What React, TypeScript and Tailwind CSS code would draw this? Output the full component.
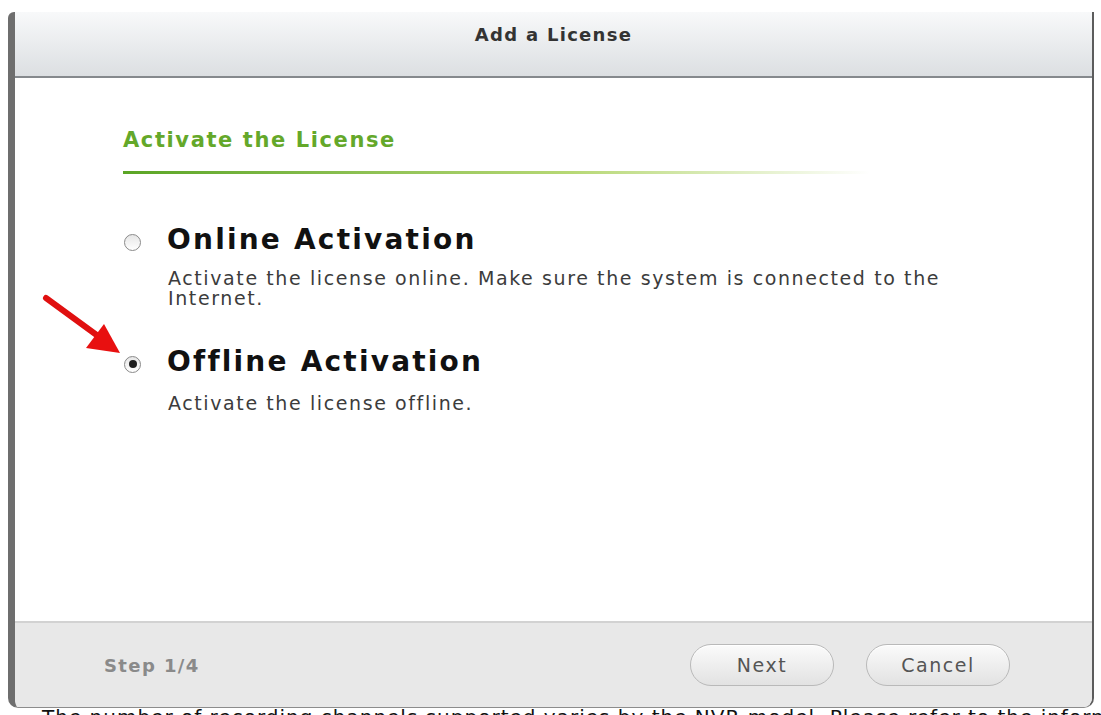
import React from "react";

function Radio({ checked }: { checked?: boolean }) {
  return (
    <span className="flex h-[17px] w-[17px] shrink-0 items-center justify-center rounded-full border-[1.5px] border-[#8a8a8a] bg-gradient-to-b from-[#e6e6e6] to-white">
      {checked && <span className="h-[8px] w-[8px] rounded-full bg-[#1e1e1e]" />}
    </span>
  );
}

function PillButton({ label }: { label: string }) {
  return (
    <button className="h-[42px] w-[144px] rounded-full border border-[#b9b9b9] bg-gradient-to-b from-[#fbfbfb] to-[#e2e2e2] text-[19px] tracking-[1.5px] text-[#555] shadow-[inset_0_1px_0_#fff]">
      {label}
    </button>
  );
}

export default function App() {
  return (
    <div className="relative h-[715px] w-[1101px] overflow-hidden bg-white font-['DejaVu_Sans',sans-serif]">
      <div className="relative z-10 ml-[8px] mt-[12px] flex h-[696px] w-[1086px] flex-col overflow-hidden rounded-tl-[6px] rounded-b-[10px] border-b border-l-[7px] border-r-2 border-b-[#8c8c8c] border-l-[#6e6e6e] border-r-[#5c5c5c] bg-white">
        {/* title bar */}
        <div className="flex h-[66px] shrink-0 items-center justify-center border-b-2 border-[#85898d] bg-gradient-to-b from-[#f8f9fa] to-[#dcdfe2]">
          <h1 className="-mt-[20px] text-[18px] font-bold tracking-[1.3px] text-[#333]">Add a License</h1>
        </div>

        {/* body */}
        <div className="flex flex-1 flex-col pl-[108px]">
          <h2 className="mt-[48px] text-[21px] font-bold leading-[28px] tracking-[1.6px] text-[#64a82a]">
            Activate the License
          </h2>
          <div className="mt-[17px] h-[3px] w-[747px] bg-gradient-to-r from-[#5aa524] via-[#b7d875] via-60% to-transparent" />

          <div className="mt-[49px] flex items-center">
            <span className="ml-[1px] mt-[4px]">
              <Radio />
            </span>
            <span className="ml-[26px] text-[28px] font-bold leading-[34px] tracking-[2.2px] text-[#111]">
              Online Activation
            </span>
          </div>
          <p className="ml-[45px] mt-[11px] text-[19px] leading-[20px] tracking-[1.6px] text-[#3c3c3c]">
            Activate the license online. Make sure the system is connected to the
            <br />
            Internet.
          </p>

          <div className="mt-[37px] flex items-center">
            <span className="ml-[1px] mt-[4px]">
              <Radio checked />
            </span>
            <span className="ml-[26px] text-[28px] font-bold leading-[34px] tracking-[2.2px] text-[#111]">
              Offline Activation
            </span>
          </div>
          <p className="ml-[45px] mt-[14px] text-[19px] leading-[20px] tracking-[1.6px] text-[#3c3c3c]">
            Activate the license offline.
          </p>
        </div>

        {/* footer */}
        <div className="flex h-[86px] shrink-0 items-center border-t-2 border-[#d2d2d2] bg-[#e8e8e8] pl-[89px] pr-[82px]">
          <span className="text-[18px] font-bold tracking-[1.4px] text-[#8a8a8a]">Step 1/4</span>
          <div className="ml-auto flex gap-[32px]">
            <PillButton label="Next" />
            <PillButton label="Cancel" />
          </div>
        </div>
      </div>

      <p className="-mt-[3px] whitespace-nowrap pl-[42px] text-[20px] leading-[24px] tracking-[1px] text-[#111]">
        The number of recording channels supported varies by the NVR model. Please refer to the information
      </p>

      {/* red annotation arrow */}
      <svg className="absolute left-[38px] top-[290px] z-20" width="90" height="70" viewBox="0 0 90 70">
        <line x1="8" y1="8" x2="60" y2="46" stroke="#e01010" strokeWidth="6" strokeLinecap="round" />
        <polygon points="82,63 48,58 66,34" fill="#e81010" />
      </svg>
    </div>
  );
}
